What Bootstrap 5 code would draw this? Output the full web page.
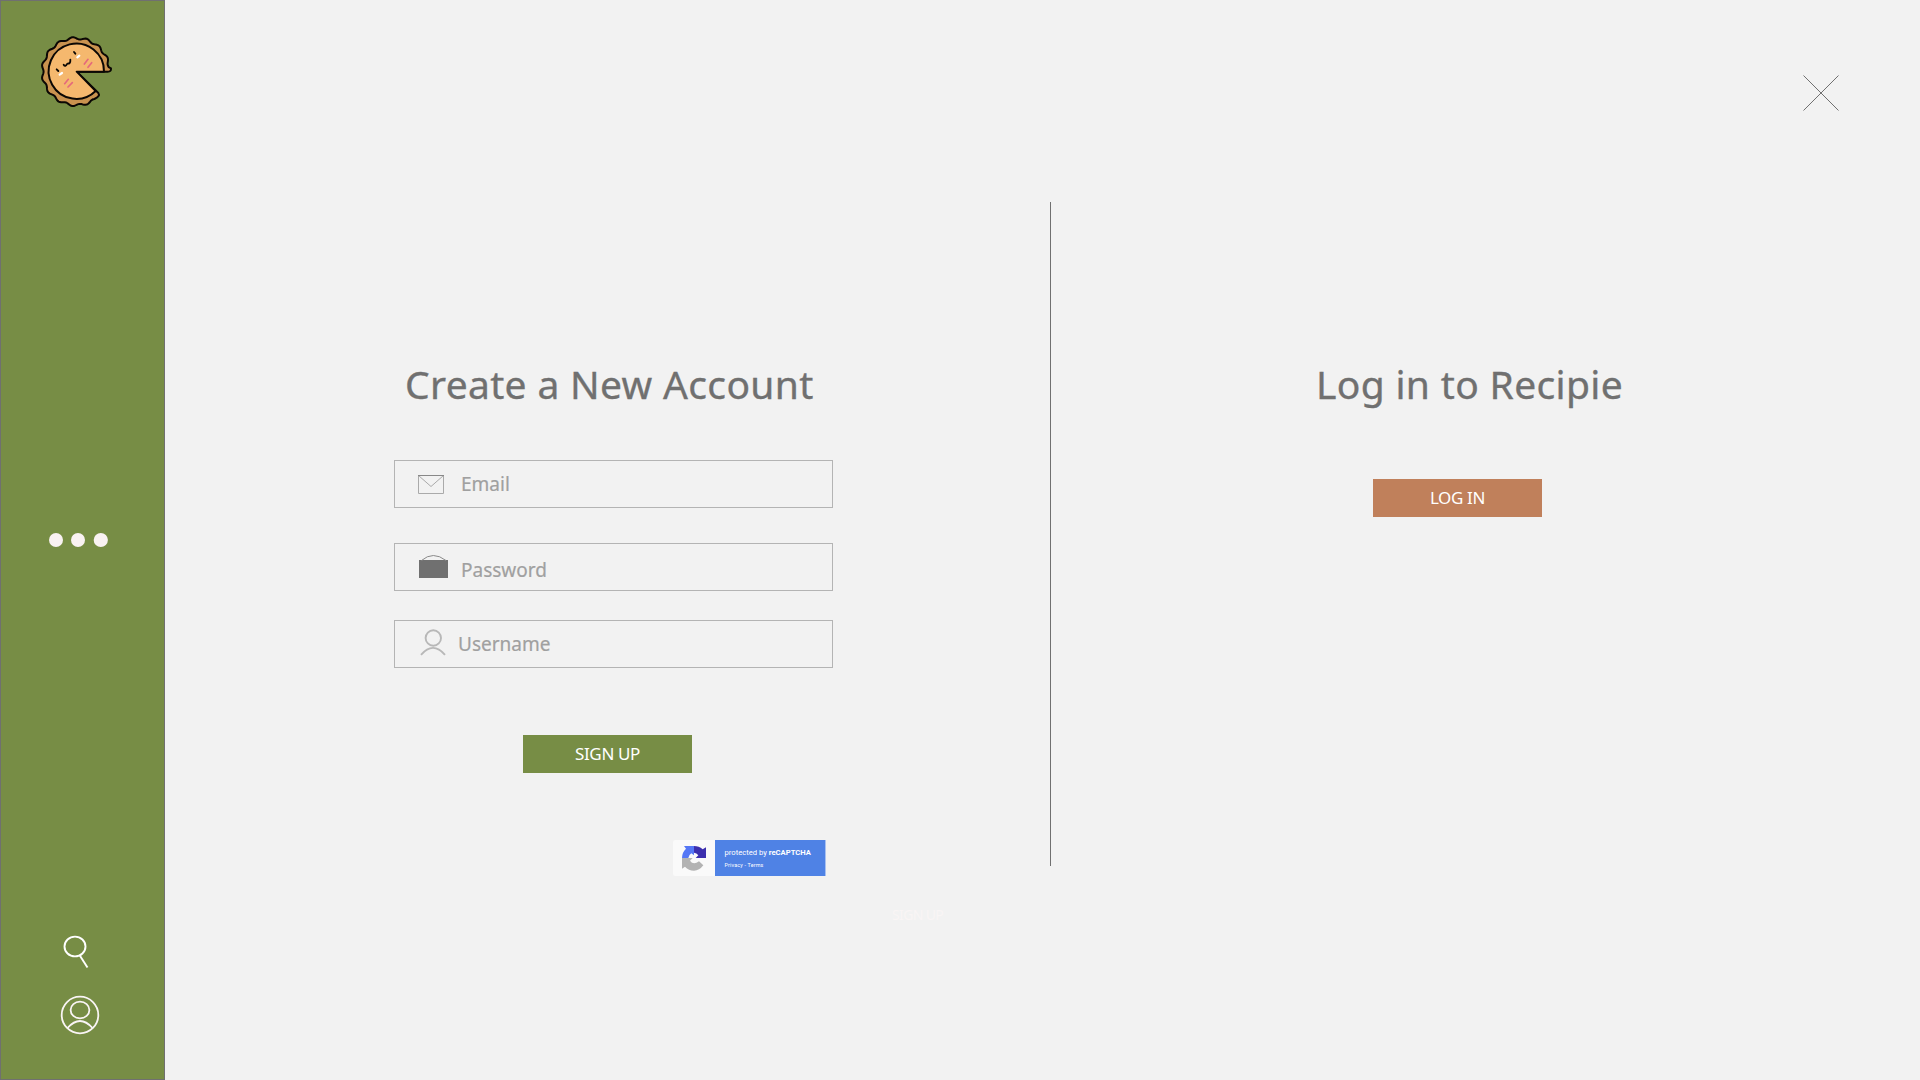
<!DOCTYPE html>
<html lang="en">
<head>
<meta charset="utf-8">
<meta name="viewport" content="width=device-width, initial-scale=1">
<title>Recipie - Sign up</title>
<link href="https://cdn.jsdelivr.net/npm/bootstrap@5.3.0/dist/css/bootstrap.min.css" rel="stylesheet">
<style>
body{background:#f2f2f2;font-family:"Noto Sans","Open Sans",sans-serif;color:#707070;height:1080px;overflow:hidden}
svg{display:block;flex:none;overflow:visible}
.side-nav{width:165px;height:1080px;background:#778d45;border:1px solid #707070;padding:34px 0 0 40px}
.side-nav .more-btn{margin:424px 0 0 8px}
.side-nav .find-btn{margin:388px 0 0 22px}
.side-nav .user-btn{margin:27px 0 0 20px}
.pane-left{width:885px;padding:354px 0 0 229px}
.pane-right{width:820px;padding:354px 0 0 266px}
.login-col{width:446px}
.pane-title{font-size:39px;line-height:60px;height:60px;white-space:nowrap;font-weight:400;margin:0;-webkit-text-stroke:.35px #707070}
.t-create{margin-left:11px;letter-spacing:.33px}
.t-login{letter-spacing:.33px;margin-left:-1px}
.divider{width:1px;height:664px;margin-top:202px;background:#707070}
.field-box{width:439px;height:48px;border:1px solid #b4b4b4;color:#a0a0a0;font-size:19px;line-height:26px;white-space:nowrap;-webkit-text-stroke:.2px #a0a0a0}
.field-email{margin-top:46px}
.field-pass{margin-top:35px}
.field-user{margin-top:29px}
.act{width:169px;height:38px;font-size:17px;line-height:38px;letter-spacing:-.35px;color:#fff;border:0;border-radius:0;padding:0;white-space:nowrap}
.act-green{background:#778d45;margin:67px 0 0 129px}
.act-brown{background:#c0805b;margin:65px 0 0 56px}
.captcha{width:153px;height:36px;margin:67px 0 0 279px;background:#fafafa;border-radius:2px 0 0 2px}
.captcha-blue{width:111px;background:#4f82e5;border-right:1px solid #a9c1f0;color:#fff;font-family:Roboto,sans-serif;padding:7px 0 0 9.500px;white-space:nowrap}
.cap-a{font-size:7.650px;line-height:12px}
.cap-b{font-size:5.400px;line-height:10px;margin-top:1px;letter-spacing:.16px}
.ghost{color:#f9f5f5;font-size:14px;line-height:20px;letter-spacing:-.65px;margin:29px 0 0 498px;white-space:nowrap}
.close-btn{margin-top:-279px;margin-left:40px}
</style>
<script src="https://cdn.jsdelivr.net/npm/bootstrap@5.3.0/dist/js/bootstrap.bundle.min.js"></script>
</head>
<body>
<div class="d-flex">
<nav class="side-nav flex-shrink-0 d-flex flex-column align-items-start">
<svg width="72" height="74" viewBox="33 30 216 222">
<g stroke="#0b0704" stroke-width="6" stroke-linejoin="round" stroke-linecap="round">
<path id="crust" fill="#c9924f"/>
<path fill="#f5b86e" d="M140 140H222A83 83 0 1 0 197 198Z"/>
<path fill="none" stroke-width="5.500" d="M101 119Q106 127 112 116Q122 117 121 104M80 133l5 5M132 81l4 5"/>
</g>
<path fill="none" stroke="#fff" stroke-width="6.500" stroke-linecap="round" d="M89 149l7-5M142 97l6-5"/>
<path fill="none" stroke="#e5697c" stroke-width="5" stroke-linecap="round" d="M104 176l11-13M114 186l13-13M163 117l11-14M174 127l11-14"/>
</svg>
<svg class="more-btn" width="60" height="14" fill="#f9f2f2"><circle cx="7" cy="7" r="7"/><circle cx="29" cy="7" r="7"/><circle cx="51.800" cy="7" r="7.100"/></svg>
<svg class="find-btn" width="28" height="34" viewBox="63 935 28 34" fill="none" stroke="#fff" stroke-width="1.900"><ellipse cx="75" cy="946.500" rx="10.500" ry="9.900"/><path d="M79.800 955.500L87.500 967.500"/></svg>
<svg class="user-btn" width="38" height="38" viewBox="61 996 38 38" fill="none" stroke="#f9f4f4" stroke-width="1.800"><circle cx="80" cy="1015" r="18.300"/><ellipse cx="80" cy="1010" rx="9.400" ry="8.300"/><path d="M67.500 1028Q80 1014 92.500 1028"/></svg>
</nav>
<main class="d-flex">
<section class="pane-left">
<h1 class="pane-title t-create"><span>Create a New Account</span></h1>
<div class="field-box field-email"><div class="d-flex"><svg width="66" height="46" viewBox="395 461 66 46" fill="none" stroke="#aaa"><path d="M418.500 475.500V493.500H443.500V475.500M418.500 475.500L431 486.500L443.500 475.500"/><path stroke="#888" d="M418 475.500H444"/></svg><span style="margin-top:10px">Email</span></div></div>
<div class="field-box field-pass"><div class="d-flex"><svg width="66" height="46" viewBox="395 544 66 46"><path fill="#707070" d="M419 560h29v18h-29z"/><path fill="none" stroke="#8a8a8a" d="M421.500 560.500Q433 550.500 446 560.500"/></svg><span style="margin-top:13px">Password</span></div></div>
<div class="field-box field-user"><div class="d-flex"><svg width="63" height="46" viewBox="395 621 63 46" fill="none" stroke="#b8b8b8" stroke-width="1.900"><circle cx="433.300" cy="638" r="7.700"/><path d="M421 654.800Q433 641 445 654.800"/></svg><span style="margin-top:10px">Username</span></div></div>
<button class="btn act act-green d-block"><span>SIGN UP</span></button>
<div class="captcha d-flex justify-content-between">
<svg width="42" height="36" viewBox="39 30 126 108"><path fill="#3c2fae" d="M102 48Q117 48 128 58L138 52V84H107L115 76Q110 68 102 68Z"/><path fill="#5577f5" d="M102 48H72L78 56Q66 67 66 84H85Q85 76 94 70L102 76Z"/><path fill="#b3b3b3" d="M66 84H98L90 92Q100 106 117 94L130 106Q118 122 102 122Q86 122 75 110L66 116Z"/></svg>
<div class="captcha-blue"><div class="cap-a"><span>protected by <b class="fw-bold">reCAPTCHA</b></span></div><div class="cap-b"><span>Privacy - Terms</span></div></div></div>
<div class="ghost"><span>SIGN UP</span></div>
</section>
<div class="divider"></div>
<section class="pane-right d-flex">
<div class="login-col"><h2 class="pane-title t-login"><span>Log in to Recipie</span></h2>
<button class="btn act act-brown d-block"><span>LOG IN</span></button></div>
<svg class="close-btn" width="36" height="36" stroke="#707070" stroke-width="1"><path d="M.5 .5L35.500 35.500M35.500 .5L.5 35.500"/></svg>
</section>
</main>
</div>
<script>
// Wavy pie crust: a circle whose radius ripples, open at the missing slice
let d = 'M140 140H233Q244 140 243 130';
for (let a = -8; a >= -304; a -= 2) {
  const t = a * Math.PI / 180;
  const r = 100.5 + 3.3 * Math.cos(15 * (a + 96) * Math.PI / 180);
  d += 'L' + (138 + r * Math.cos(t)).toFixed(1) + ' ' + (140 + r * Math.sin(t)).toFixed(1);
}
document.getElementById('crust').setAttribute('d', d + 'Q212 213 205 204Z');
</script>
</body>
</html>
